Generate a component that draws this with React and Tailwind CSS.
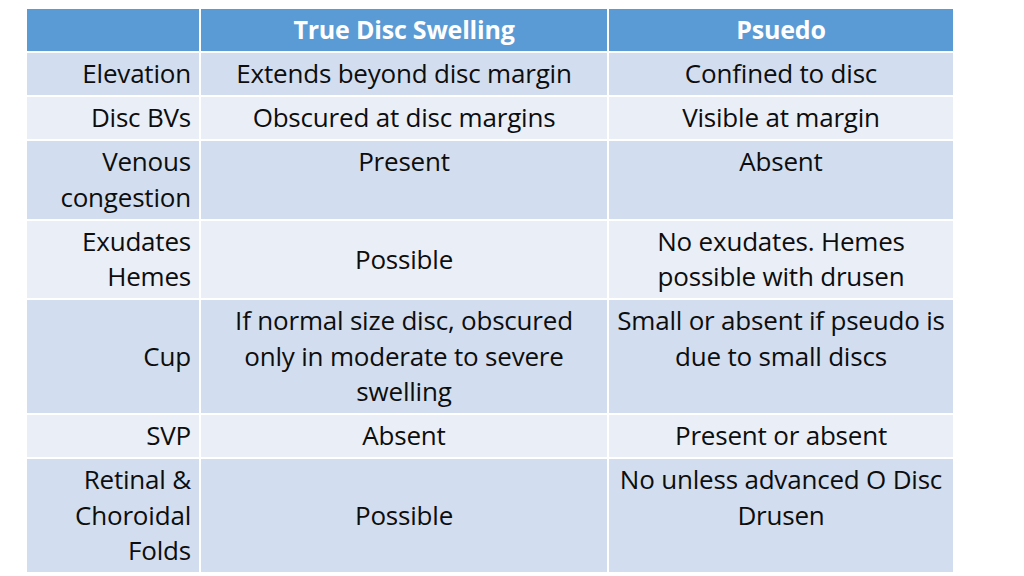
import React from 'react';

const rows = [
  {
    label: ['Elevation'],
    labelAlign: 'center',
    true: { lines: ['Extends beyond disc margin'], align: 'center' },
    pseudo: { lines: ['Confined to disc'], align: 'center' },
  },
  {
    label: ['Disc BVs'],
    labelAlign: 'center',
    true: { lines: ['Obscured at disc margins'], align: 'center' },
    pseudo: { lines: ['Visible at margin'], align: 'center' },
  },
  {
    label: ['Venous', 'congestion'],
    labelAlign: 'start',
    true: { lines: ['Present'], align: 'start' },
    pseudo: { lines: ['Absent'], align: 'start' },
  },
  {
    label: ['Exudates', 'Hemes'],
    labelAlign: 'start',
    true: { lines: ['Possible'], align: 'center' },
    pseudo: { lines: ['No exudates. Hemes', 'possible with drusen'], align: 'start' },
  },
  {
    label: ['Cup'],
    labelAlign: 'center',
    true: {
      lines: ['If normal size disc, obscured', 'only in moderate to severe', 'swelling'],
      align: 'start',
    },
    pseudo: { lines: ['Small or absent if pseudo is', 'due to small discs'], align: 'start' },
  },
  {
    label: ['SVP'],
    labelAlign: 'center',
    true: { lines: ['Absent'], align: 'center' },
    pseudo: { lines: ['Present or absent'], align: 'center' },
  },
  {
    label: ['Retinal &', 'Choroidal', 'Folds'],
    labelAlign: 'start',
    true: { lines: ['Possible'], align: 'center' },
    pseudo: { lines: ['No unless advanced O Disc', 'Drusen'], align: 'start' },
  },
];

const Lines = ({ lines }) =>
  lines.map((l, i) => (
    <div key={i} className="whitespace-nowrap">
      {l}
    </div>
  ));

const Cell = ({ lines, align, side, bg }) => (
  <div
    className={`${bg} flex flex-col py-[3.25px] ${
      align === 'center' ? 'justify-center' : 'justify-start'
    } ${side === 'left' ? 'items-end pr-[8px] text-right' : 'items-center text-center'}`}
  >
    <Lines lines={lines} />
  </div>
);

export default function App() {
  return (
    <div
      className="w-[1024px] h-[576px] bg-white overflow-hidden pt-[9px] pl-[27px]"
      style={{ fontFamily: '"Open Sans", "Liberation Sans", sans-serif' }}
    >
      <div className="w-[926px] grid grid-cols-[172px_406px_344px] gap-[2px] bg-white text-[26px] leading-[35.5px] text-[#0d0d0d] tracking-[-0.2px]">
        {/* Header */}
        <div className="bg-[#5b9bd5] py-[3.25px]" />
        <div className="bg-[#5b9bd5] py-[3.25px] text-center text-[25px] font-bold text-white">True Disc Swelling</div>
        <div className="bg-[#5b9bd5] py-[3.25px] text-center text-[25px] font-bold text-white">Psuedo</div>

        {rows.map((r, i) => {
          const bg = i % 2 === 0 ? 'bg-[#d2deef]' : 'bg-[#eaeff7]';
          return (
            <React.Fragment key={i}>
              <Cell lines={r.label} align={r.labelAlign} side="left" bg={bg} />
              <Cell lines={r.true.lines} align={r.true.align} bg={bg} />
              <Cell lines={r.pseudo.lines} align={r.pseudo.align} bg={bg} />
            </React.Fragment>
          );
        })}
      </div>
    </div>
  );
}
